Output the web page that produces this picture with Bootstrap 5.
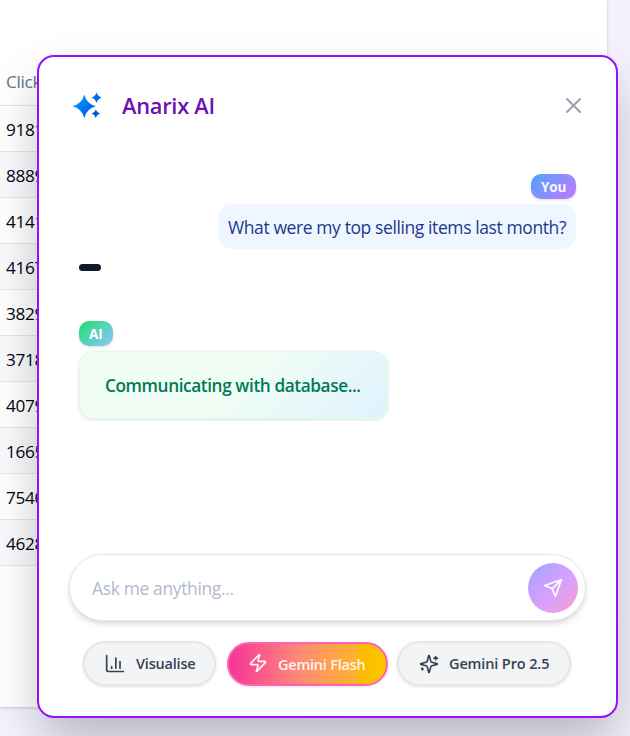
<!DOCTYPE html>
<html lang="en">
<head>
<meta charset="utf-8">
<meta name="viewport" content="width=device-width, initial-scale=1">
<title>Anarix AI</title>
<link href="https://cdn.jsdelivr.net/npm/bootstrap@5.3.0/dist/css/bootstrap.min.css" rel="stylesheet">
<style>
body{font-family:"Open Sans","Noto Sans",sans-serif;height:736px;overflow:hidden;position:relative;background:linear-gradient(100deg,#f3f4ff,#f5f1fe)}
.sheet{width:607px;height:707px;padding-top:59px;box-shadow:0 1px 3px rgba(0,0,0,.18)}
.sheet-row{height:46px;padding-left:6px;border-bottom:1px solid #e2e8f0;color:#020618;font-size:17.2px;line-height:48px;letter-spacing:-.3px}
.sheet-row:nth-child(odd){background:#f8fafc}
.sheet-row.sheet-head{height:47px;background:#fff;color:#62748e;font-weight:500;letter-spacing:-.3px;line-height:46px}
.chat-window{left:37px;top:55px;width:581px;height:663px;border:2px solid #9810fa;border-radius:17px;box-shadow:0 25px 50px -3px rgba(0,0,0,.25);padding:0 30px}
.chat-head{height:97px;padding:0 5px 0 3px}
.chat-title{font-size:21.8px;font-weight:600;color:#6e11b0;letter-spacing:-.25px;margin-left:19px;line-height:30px}
.talk{padding:0 10px;height:400px}
.who{height:25px;border-radius:10px;padding:0 10px;font-size:13.5px;font-weight:700;color:#fff;line-height:26px;letter-spacing:-.15px;box-shadow:0 1px 3px rgba(0,0,0,.14)}
.who-you{width:45px;margin-top:20px;background:linear-gradient(135deg,#51a2ff,#c27aff);color:#f8f5ff}
.who-ai{width:34px;margin-top:50px;background:linear-gradient(135deg,#1fdf72,#8ec5ff)}
.ask{margin-top:5px;width:358px;height:45px;border-radius:14px;background:#eff6ff;color:#1c398e;font-size:17.5px;line-height:47px;padding-left:10px;letter-spacing:-.4px}
.dash{width:22px;height:7px;border-radius:4px;background:#0f172b;margin-top:15px}
.reply{margin-top:5px;width:309px;height:68px;border:1px solid #dcfce7;border-radius:14px;background:linear-gradient(135deg,#f0fdf4 50%,#dff2fe);color:#007a55;font-size:17.2px;font-weight:600;line-height:67px;padding-left:25px;letter-spacing:-.39px;box-shadow:0 1px 3px rgba(0,0,0,.13)}
.prompt{height:67px;border:1px solid #e5e7eb;border-radius:34px;padding:0 7px 0 22px;box-shadow:0 4px 7px -1px rgba(0,0,0,.13),0 2px 4px -2px rgba(0,0,0,.1)}
.prompt input{color:#4a5565;font-size:17.4px;letter-spacing:-.32px;margin-top:2px}
.prompt input::placeholder{color:#b1bacb;opacity:1}
.send{width:50px;height:50px;background:linear-gradient(135deg,#a3a1ff,#d8a0ff 55%,#f7a0c8)}
.choices{margin-top:20px;padding-left:14px}
.choice{height:45px;border:2px solid #e5e7eb;border-radius:23px;background:#f3f4f6;color:#364153;font-size:14.5px;font-weight:600;letter-spacing:-.2px;padding:0 0 0 20px;box-shadow:0 1px 3px rgba(0,0,0,.12)}
.choice span{padding-top:1px}
.choice svg{margin-right:11px;flex:none}
.choice-a{width:133px}.choice-c{width:174px;margin-left:9px;letter-spacing:-.13px}
.choice-c svg{margin-right:10px}
.choice-b{width:161px;height:44px;margin:1px 0 0 11px;padding-left:19px;letter-spacing:-.22px;border-color:#fb64b6;color:#fff5ed;background:linear-gradient(90deg,#f6339a,#ff8b78 45%,#ffb02e 80%,#ffb900 84%,#fdc700)}
.choice-b svg{margin:-2px 10px 0 0}
.fit{white-space:nowrap}
</style>
</head>
<body>
<main class="sheet bg-white">
  <div class="sheet-row sheet-head">Clicks</div>
  <div class="sheet-row">9181</div><div class="sheet-row">8889</div><div class="sheet-row">4141</div><div class="sheet-row">4167</div><div class="sheet-row">3829</div><div class="sheet-row">3718</div><div class="sheet-row">4079</div><div class="sheet-row">1665</div><div class="sheet-row">7540</div><div class="sheet-row">4628</div>
</main>
<section class="chat-window position-absolute bg-white">
  <header class="chat-head d-flex align-items-center">
    <svg width="31" height="28" viewBox="0 0 31 28"><defs><linearGradient id="spark" gradientUnits="userSpaceOnUse" x1="0" y1="4" x2="24" y2="22"><stop stop-color="#00a6ff"/><stop offset="1" stop-color="#0051e6"/></linearGradient></defs><g fill="url(#spark)"><path d="M12.3 2.5Q14.5 12 24 14.3Q14.5 16.5 12.3 26.3Q10 16.5.3 14.3Q10 12 12.3 2.5Z"/><path d="M24.6.6Q25.9 4.4 29.7 5.6Q25.9 6.9 24.6 10.7Q23.3 6.9 19.5 5.6Q23.3 4.4 24.6.6Z"/><path d="M23.8 17.4Q24.9 20.6 28 21.6Q24.9 22.6 23.8 25.9Q22.8 22.6 19.6 21.6Q22.8 20.6 23.8 17.4Z"/></g></svg>
    <span class="chat-title fit">Anarix AI</span>
    <svg class="ms-auto" width="15" height="15" viewBox="0 0 15 15" fill="none" stroke="#99a1af" stroke-width="2" stroke-linecap="round"><path d="M1 1l13 13M14 1L1 14"/></svg>
  </header>
  <div class="talk d-flex flex-column">
    <div class="who who-you align-self-end fit">You</div>
    <div class="ask align-self-end"><span class="fit">What were my top selling items last month?</span></div>
    <div class="dash"></div>
    <div class="who who-ai fit">AI</div>
    <div class="reply"><span class="fit">Communicating with database...</span></div>
  </div>
  <div class="prompt d-flex align-items-center bg-white">
    <input class="border-0 bg-transparent flex-grow-1 p-0" type="text" placeholder="Ask me anything..." aria-label="Ask me anything">
    <button class="send border-0 rounded-circle p-0 d-flex align-items-center justify-content-center" aria-label="Send"><svg width="20" height="20" viewBox="0 0 24 24" fill="none" stroke="#fff" stroke-width="2" stroke-linejoin="round" stroke-linecap="round"><path d="M22 2L15 22L11 13L2 9Z M22 2L11 13"/></svg></button>
  </div>
  <div class="choices d-flex">
    <button class="choice choice-a d-flex align-items-center fit"><svg width="20" height="20" viewBox="0 0 24 24" fill="none" stroke="currentColor" stroke-width="2" stroke-linecap="round"><path d="M2 2v17a2 2 0 0 0 2 2h18M8 17v-2M13 17V5M18 17V9"/></svg><span>Visualise</span></button>
    <button class="choice choice-b d-flex align-items-center fit"><svg width="20" height="20" viewBox="0 0 24 24" fill="none" stroke="currentColor" stroke-width="2" stroke-linecap="round" stroke-linejoin="round"><path d="M4 14a1 1 0 0 1-.78-1.63l9.9-10.2a.5.5 0 0 1 .86.46l-1.92 6.02A1 1 0 0 0 13 10h7a1 1 0 0 1 .78 1.63l-9.9 10.2a.5.5 0 0 1-.86-.46l1.92-6.02A1 1 0 0 0 11 14z"/></svg><span>Gemini Flash</span></button>
    <button class="choice choice-c d-flex align-items-center fit"><svg width="20" height="20" viewBox="0 0 24 24" fill="none" stroke="currentColor" stroke-width="2" stroke-linecap="round" stroke-linejoin="round"><path d="M9.937 15.5A2 2 0 0 0 8.5 14.063l-6.135-1.582a.5.5 0 0 1 0-.962L8.5 9.936A2 2 0 0 0 9.937 8.5l1.582-6.135a.5.5 0 0 1 .963 0L14.063 8.5A2 2 0 0 0 15.5 9.937l6.135 1.581a.5.5 0 0 1 0 .964L15.5 14.063a2 2 0 0 0-1.437 1.437l-1.582 6.135a.5.5 0 0 1-.963 0zM20 3v4M22 5h-4M4 17v2M5 18H3"/></svg><span>Gemini Pro 2.5</span></button>
  </div>
</section>
<script src="https://cdn.jsdelivr.net/npm/bootstrap@5.3.0/dist/js/bootstrap.bundle.min.js"></script>
</body>
</html>
